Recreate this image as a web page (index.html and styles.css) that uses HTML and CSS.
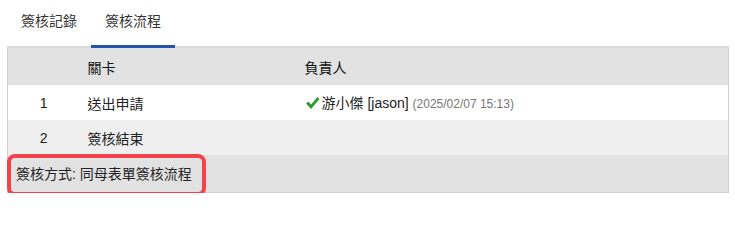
FILE: index.html
```html
<!DOCTYPE html>
<html lang="zh-Hant">
<head>
<meta charset="utf-8">
<link rel="stylesheet" href="styles.css">
</head>
<body>
<div class="wrap">
  <div class="tabs">
    <div class="tab">簽核記錄</div>
    <div class="tab active">簽核流程</div>
  </div>
  <table class="flow">
    <colgroup><col class="c1"><col class="c2"><col class="c3"></colgroup>
    <thead>
      <tr class="head"><th></th><th>關卡</th><th>負責人</th></tr>
    </thead>
    <tbody>
      <tr class="r1"><td class="num">1</td><td>送出申請</td><td><span class="check"><svg width="15" height="14" viewBox="0 0 15 14"><path d="M1 7.5 L3.5 5.5 L6 8.5 L12.5 1 L14.5 3 L6 13 Z" fill="#2e9b2e"/></svg></span>游小傑 [jason] <span class="time">(2025/02/07 15:13)</span></td></tr>
      <tr class="r2"><td class="num">2</td><td>簽核結束</td><td></td></tr>
      <tr class="foot"><td colspan="3"><span class="mark"></span>簽核方式: 同母表單簽核流程</td></tr>
    </tbody>
  </table>
</div>
</body>
</html>
```
FILE: styles.css
```css
html, body { margin: 0; padding: 0; background: #fff; }
body {
  font-family: "Liberation Sans", "Noto Sans CJK TC", sans-serif;
  font-size: 14px;
  color: #222;
}
.wrap { padding-left: 7px; width: 722px; }
.tabs {
  display: flex;
  height: 46px;
  border-bottom: 2px solid #dadada;
  box-sizing: border-box;
  height: 48px;
}
.tab {
  padding: 0 14px;
  line-height: 42px;
  color: #333;
  margin-bottom: -2px;
}
.tab.active { border-bottom: 3px solid #2453a6; line-height: 42px; margin-top: 0; height: 45px; box-sizing: border-box; margin-bottom: -2px; }
.tabs .tab.active { height: 48px; border-bottom-width: 3px; }
.flow {
  width: 722px;
  border-collapse: collapse;
  border-left: 1px solid #cfcfcf;
  border-right: 1px solid #cfcfcf;
  border-bottom: 1px solid #cfcfcf;
}
.c1 { width: 72px; }
.c2 { width: 217px; }
.flow th, .flow td { padding: 0 8px; text-align: left; font-weight: normal; }
.head { background: #e2e2e2; height: 37px; }
.head th { color: #111; }
.r1 { background: #fff; height: 35px; }
.r2 { background: #efefef; height: 35px; }
.foot { background: #e2e2e2; height: 37px; }
.foot td { position: relative; padding-left: 8px; }
.num { text-align: center !important; }
.check { display: inline-block; vertical-align: -2px; margin-right: 2px; }
.time { font-size: 12px; color: #777; }
.mark {
  position: absolute;
  left: -1px; top: -1px;
  width: 199px; height: 42px;
  border: 4px solid #f2424a;
  border-radius: 8px;
  box-sizing: border-box;
}
```
